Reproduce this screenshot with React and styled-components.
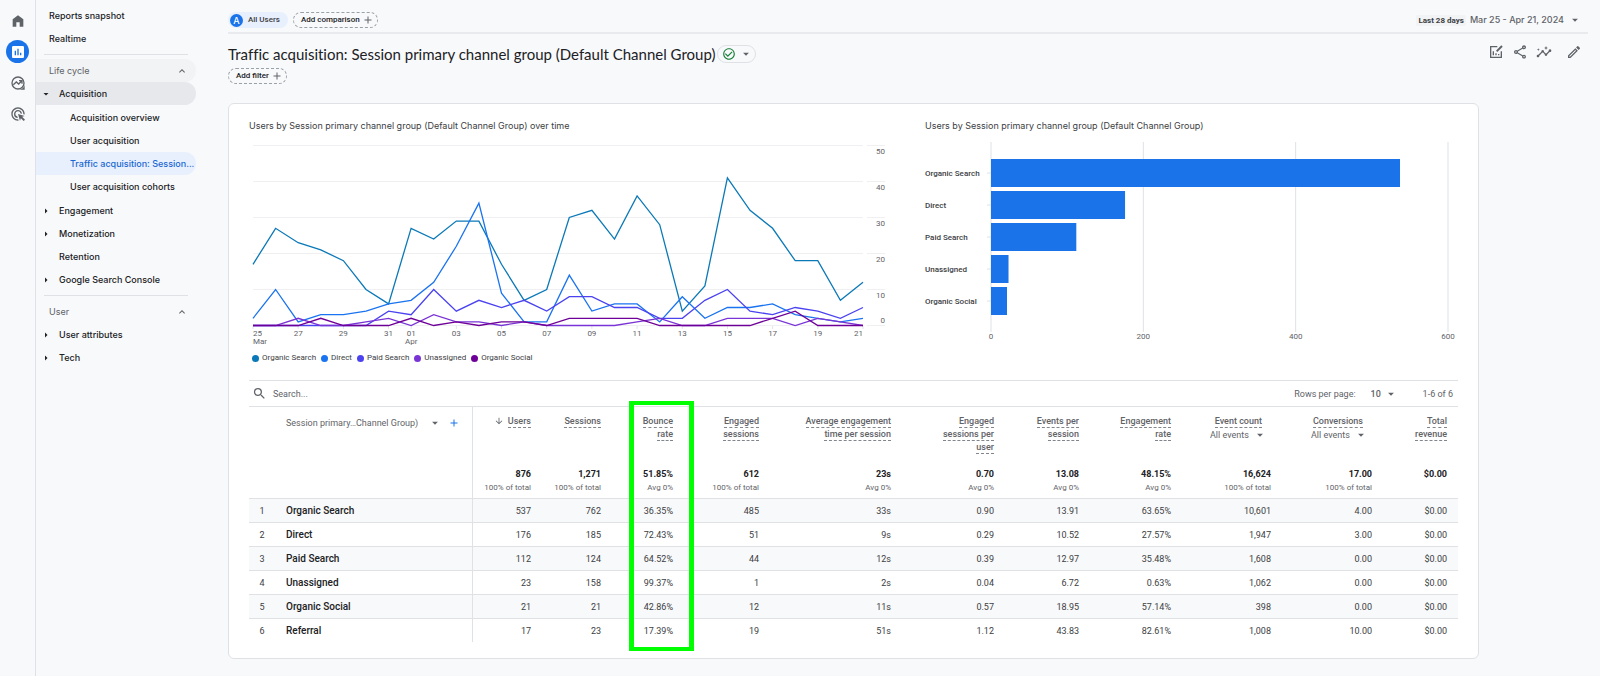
import React from 'react';
import styled, { createGlobalStyle, css } from 'styled-components';
import {
  MdAssessment, MdAdsClick, MdOutlineShare, MdInsights, MdOutlineModeEdit, MdCheckCircleOutline,
  MdSearch, MdArrowDropDown, MdArrowRight, MdArrowDownward, MdAdd, MdExpandLess,
} from 'react-icons/md';

const sans = 'Inter, "Open Sans", sans-serif';
const roboto = 'Roboto, "Liberation Sans", sans-serif';
const ink = '#202124';
const body = '#3c4043';
const muted = '#5f6368';
const line = '#dfe1e5';
const blue = '#1a73e8';

const GlobalStyle = createGlobalStyle`
  *, *::before, *::after { box-sizing: border-box; }
  body { margin: 0; background: #f8f9fb; color: ${ink}; font-family: ${roboto}; font-size: 9px; }
  button, select, input { font: inherit; color: inherit; background: none; border: 0; padding: 0; margin: 0; }
  button { cursor: pointer; }
  a { color: inherit; text-decoration: none; }
  ul { list-style: none; margin: 0; padding: 0; }
  svg { display: block; flex: none; }
`;

const Page = styled.div`
  display: flex;
  min-height: 100vh;
`;

/* ---------- icon rail ---------- */
const Rail = styled.nav`
  flex: 0 0 36px;
  display: flex;
  flex-direction: column;
  align-items: center;
  gap: 8px;
  padding-top: 9px;
  border-right: 1px solid ${line};
`;

const RailLink = styled.a`
  display: grid;
  place-items: center;
  width: 23px;
  height: 23px;
  border-radius: 50%;
  color: ${(p) => (p.$active ? '#fff' : muted)};
  background: ${(p) => (p.$active ? blue : 'transparent')};
`;

/* ---------- report navigation ---------- */
const Nav = styled.nav`
  flex: 0 0 160px;
  padding-top: 4px;
  font: 500 9px/23px ${sans};
`;

const indents = { root: 13, group: 23, leaf: 34 };

const rowStyle = css`
  display: flex;
  align-items: center;
  width: 100%;
  height: 23px;
  padding-left: ${(p) => indents[p.$level]}px;
  border-radius: 0 12px 12px 0;
  white-space: nowrap;
  text-align: left;
`;

const NavLink = styled.a`
  ${rowStyle}
  color: ${(p) => (p.$selected ? '#1967d2' : ink)};
  background: ${(p) => (p.$selected ? '#e8f0fe' : 'transparent')};
`;

const GroupButton = styled.button`
  ${rowStyle}
  padding-left: 4px;
  gap: 7px;
  background: ${(p) => (p.$open ? '#e6e8eb' : 'transparent')};
`;

const SectionButton = styled.button`
  ${rowStyle}
  justify-content: space-between;
  padding-right: 8px;
  font-weight: 400;
  color: ${muted};
  background: ${(p) => (p.$shaded ? '#f1f3f4' : 'transparent')};
`;

const NavRule = styled.hr`
  margin: 4px 8px;
  border: 0;
  border-top: 1px solid ${line};
`;

const SubList = styled.ul`
  padding: 1px 0;
`;

/* ---------- main column ---------- */
const Main = styled.main`
  flex: 1;
  min-width: 0;
  padding: 0 12px 18px 32px;
`;

const CompareBar = styled.div`
  display: flex;
  align-items: center;
  gap: 5px;
  padding: 12px 0 4px;
  border-bottom: 2px solid #e8eaed;
  font: 500 8px/16px ${roboto};
`;

const UserChip = styled.button`
  display: flex;
  align-items: center;
  gap: 5px;
  height: 16px;
  padding: 0 8px 0 2px;
  border-radius: 8px;
  background: #e8f0fe;
  color: ${body};
`;

const Avatar = styled.span`
  display: grid;
  place-items: center;
  width: 13px;
  height: 13px;
  border-radius: 50%;
  background: ${blue};
  color: #fff;
  font: 500 9px/13px ${sans};
`;

const DashedChip = styled.button`
  display: inline-flex;
  align-items: center;
  gap: 2px;
  height: 16px;
  padding: 0 3px 0 7px;
  border: 1px dashed #9aa0a6;
  border-radius: 8px;
  font: 500 8px/14px ${roboto};
`;

const DateButton = styled.button`
  display: flex;
  align-items: center;
  margin-left: auto;
  padding-right: 6px;
  gap: 4px;
  color: ${muted};
  font: 500 9px/16px ${sans};
`;

const DateTag = styled.span`
  padding: 0 2px;
  border-radius: 2px;
  background: #f1f3f4;
  color: ${body};
  font: 700 8px/11px ${roboto};
`;

const TitleRow = styled.div`
  display: flex;
  align-items: center;
  gap: 2px;
  margin-top: 11px;
  height: 18px;
`;

const Title = styled.h1`
  margin: 0;
  font: 400 15px/18px Lato, "Open Sans", sans-serif;
  font-variant-ligatures: none;
`;

const StatusPill = styled.button`
  display: flex;
  align-items: center;
  gap: 3px;
  height: 18px;
  padding: 0 2px 0 4px;
  border: 1px solid ${line};
  border-radius: 9px;
  color: ${muted};
`;

const Tools = styled.div`
  display: flex;
  gap: 8px;
  margin-left: auto;
  padding: 0 6px 4px 0;
  color: ${muted};

  button:last-child { margin-left: 6px; }
`;

const FilterRow = styled.div`
  display: flex;
  margin-top: 5px;
`;

const Card = styled.section`
  margin: 19px 109px 0 0;
  padding: 15px 20px 16px;
  border: 1px solid ${line};
  border-radius: 6px;
  background: #fff;
`;

/* ---------- charts ---------- */
const Charts = styled.div`
  display: grid;
  grid-template-columns: 636fr 533fr;
  gap: 40px;
`;

const ChartTitle = styled.h2`
  margin: 0 0 7px;
  color: ${body};
  font: 400 9px/14px ${sans};
`;

const Plot = styled.svg`
  width: 100%;
  height: auto;
  font-family: ${roboto};
  font-size: 8px;
  fill: ${muted};
`;

const Legend = styled.ul`
  display: flex;
  gap: 5px;
  padding: 6px 3px 16px;
  color: ${body};
  font: 400 8px/12px ${roboto};

  li { display: flex; align-items: center; gap: 3px; }
`;

const Dot = styled.span`
  width: 7px;
  height: 7px;
  border-radius: 50%;
  background: ${(p) => p.$color};
`;

/* ---------- table ---------- */
const TableBar = styled.div`
  display: flex;
  align-items: center;
  height: 27px;
  padding: 0 5px 0 3px;
  border: solid ${line};
  border-width: 1px 0;
  color: ${muted};
  font: 400 9px/16px ${roboto};
`;

const SearchBox = styled.label`
  flex: 1;
  display: flex;
  align-items: center;
  gap: 6px;

  input { flex: 1; outline: 0; }
  input::placeholder { color: ${muted}; opacity: 1; }
`;

const PageSize = styled.label`
  display: flex;
  align-items: center;
  gap: 15px;
  margin-right: 25px;
`;

const SelectBox = styled.span`
  display: inline-flex;
  align-items: center;
  gap: ${(p) => p.$gap}px;
  font-weight: ${(p) => p.$weight || 400};

  select { appearance: none; outline: 0; font-weight: inherit; }
`;

const TableArea = styled.div`
  position: relative;
`;

const Table = styled.table`
  width: 100%;
  table-layout: fixed;
  border-collapse: separate;
  border-spacing: 0;
  color: ${body};

  th, td { padding: 0 11px 0 0; text-align: right; font-weight: 400; }
`;

const HeadRow = styled.tr`
  height: 60px;

  th { padding-top: 8px; vertical-align: top; color: ${muted}; font: 500 9px/13px ${roboto}; }
`;

const MetricHead = styled.th`
  && {
    padding-left: ${(p) => (p.$oneLine ? 0 : 24)}px;
    padding-right: ${(p) => (p.$events ? 20 : 11)}px;
    white-space: ${(p) => (p.$oneLine ? 'nowrap' : 'normal')};
  }

  ${SelectBox} { margin-right: -5px; }
`;

const Term = styled.span`
  padding-bottom: 1px;
  border-bottom: 1px dashed #80868b;
`;

const SortIcon = styled(MdArrowDownward)`
  display: inline-block;
  margin-right: 4px;
  vertical-align: -2px;
`;

const DimensionCell = styled.th`
  && { border-right: 1px solid ${line}; padding-right: 0; text-align: left; }
`;

const DimensionPicker = styled.div`
  display: flex;
  align-items: center;
  gap: 6px;
  height: 16px;
  font-weight: 400;

  button { display: flex; align-items: center; gap: 10px; white-space: nowrap; }
`;

const TotalsRow = styled.tr`
  height: 31px;

  td { vertical-align: top; line-height: 14px; }
`;

const TotalValue = styled.strong`
  display: block;
  color: ${ink};
  font: 700 9px/14px ${roboto};
`;

const TotalNote = styled.span`
  display: block;
  color: ${muted};
  font: 400 8px/14px ${roboto};
`;

const DataRow = styled.tr`
  height: 24px;
  background: ${(p) => (p.$shaded ? '#f8f9fa' : '#fff')};

  th, td { border-top: 1px solid ${line}; }
  td:first-child { padding: 0 11px 0 0; text-align: center; }
`;

const RowName = styled(DimensionCell)`
  && { color: ${ink}; font: 500 10px/14px ${roboto}; }
`;

const Highlight = styled.div`
  position: absolute;
  top: -6px;
  bottom: -9px;
  left: calc(100% * 380 / 1209);
  width: calc(100% * 65 / 1209);
  border: solid #00ff00;
  border-width: 4px 5px;
  pointer-events: none;
`;

/* ---------- drawn icons ---------- */
const HomeIcon = () => (
  <svg width="16" height="16" viewBox="0 0 24 24" fill="currentColor">
    <path d="M4 20.500V9.500L12 3.500l8 6v11h-5.500V14h-5v6.500z" />
  </svg>
);

const ExploreIcon = () => (
  <svg width="16" height="16" viewBox="0 0 24 24" fill="none" stroke="currentColor" strokeWidth="2">
    <circle cx="12" cy="12" r="9" />
    <path d="M22 14v8h-8c4 0 8-4 8-8z" fill="currentColor" stroke="none" />
    <path d="M5 14.500l4.500-4 3.500 3 4-4M13.500 8.500H18V13" />
  </svg>
);

const EditChartIcon = () => (
  <svg width="16" height="16" viewBox="0 0 24 24" fill="none" stroke="currentColor" strokeWidth="2">
    <path d="M14 4H4v16h16v-9M8 17v-6M12 17v-3M16 17v-2" />
    <path d="M13 11l8-8" strokeWidth="3" />
  </svg>
);

/* ---------- data ---------- */
const series = [
  { name: 'Organic Search', color: '#0b79b7', values: [17, 27, 23, 21, 18, 10, 6, 27, 24, 29, 29, 17, 7, 10, 30, 32, 24, 36, 28, 4, 11, 41, 32, 27, 18, 18, 7, 12] },
  { name: 'Direct', color: '#1a73f0', values: [2, 10, 1, 3, 3, 4, 6, 7, 12, 22, 34, 9, 1, 1, 14, 4, 6, 6, 1, 8, 2, 5, 5, 6, 3, 2, 1, 2] },
  { name: 'Paid Search', color: '#4b43f0', values: [0, 0, 0, 0, 0, 0, 4, 3, 10, 4, 7, 5, 7, 4, 8, 8, 5, 5, 2, 2, 7, 10, 4, 3, 5, 4, 2, 5] },
  { name: 'Unassigned', color: '#7a34d6', values: [0, 0, 2, 0, 0, 1, 2, 0, 3, 1, 1, 0, 1, 0, 0, 0, 0, 1, 2, 0, 0, 2, 2, 2, 0, 2, 1, 0] },
  { name: 'Organic Social', color: '#6f0097', values: [0, 0, 0, 2, 0, 0, 0, 2, 0, 1, 0, 1, 1, 0, 2, 2, 2, 2, 0, 0, 0, 0, 0, 2, 4, 0, 0, 0] },
];

const days = [
  [0, '25', 'Mar'], [2, '27'], [4, '29'], [6, '31'], [7, '01', 'Apr'], [9, '03'], [11, '05'], [13, '07'],
  [15, '09'], [17, '11'], [19, '13'], [21, '15'], [23, '17'], [25, '19'], [27, '21'],
];

const bars = [['Organic Search', 537], ['Direct', 176], ['Paid Search', 112], ['Unassigned', 23], ['Organic Social', 21]];

const columns = [
  { width: 69, label: 'Users', sorted: true, oneLine: true, total: '876', note: '100% of total' },
  { width: 70, label: 'Sessions', oneLine: true, total: '1,271', note: '100% of total' },
  { width: 72, label: 'Bounce rate', total: '51.85%', note: 'Avg 0%' },
  { width: 86, label: 'Engaged sessions', total: '612', note: '100% of total' },
  { width: 132, label: 'Average engagement time per session', total: '23s', note: 'Avg 0%' },
  { width: 103, label: 'Engaged sessions per user', total: '0.70', note: 'Avg 0%' },
  { width: 85, label: 'Events per session', total: '13.08', note: 'Avg 0%' },
  { width: 92, label: 'Engagement rate', total: '48.15%', note: 'Avg 0%' },
  { width: 100, label: 'Event count', events: true, oneLine: true, total: '16,624', note: '100% of total' },
  { width: 101, label: 'Conversions', events: true, oneLine: true, total: '17.00', note: '100% of total' },
  { width: 75, label: 'Total revenue', total: '$0.00' },
];

const rows = [
  ['Organic Search', '537', '762', '36.35%', '485', '33s', '0.90', '13.91', '63.65%', '10,601', '4.00', '$0.00'],
  ['Direct', '176', '185', '72.43%', '51', '9s', '0.29', '10.52', '27.57%', '1,947', '3.00', '$0.00'],
  ['Paid Search', '112', '124', '64.52%', '44', '12s', '0.39', '12.97', '35.48%', '1,608', '0.00', '$0.00'],
  ['Unassigned', '23', '158', '99.37%', '1', '2s', '0.04', '6.72', '0.63%', '1,062', '0.00', '$0.00'],
  ['Organic Social', '21', '21', '42.86%', '12', '11s', '0.57', '18.95', '57.14%', '398', '0.00', '$0.00'],
  ['Referral', '17', '23', '17.39%', '19', '51s', '1.12', '43.83', '82.61%', '1,008', '10.00', '$0.00'],
];

/* ---------- parts ---------- */
const dayX = (i) => 4 + (i * 610) / 27;
const userY = (v) => 185.5 - v * 3.6;

const LineChart = () => (
  <Plot viewBox="0 0 636 206" role="img" aria-label="Users over time">
    {[0, 10, 20, 30, 40, 50].map((v) => (
      <g key={v}>
        <path d={`M4 ${userY(v)}H614M618 ${userY(v)}H636`} stroke="#f0f0f2" />
        <text x="636" y={v ? userY(v) + 8 : 183} textAnchor="end">{v}</text>
      </g>
    ))}
    {days.map(([i, day, month]) => {
      const anchor = i === 0 ? 'start' : i === 27 ? 'end' : 'middle';
      return (
        <g key={day} textAnchor={anchor}>
          <path d={`M${dayX(i)} 186v3`} stroke="#e4e5e8" />
          <text x={dayX(i)} y="196">{day}</text>
          {month && <text x={dayX(i)} y="204">{month}</text>}
        </g>
      );
    })}
    {series.map((s) => (
      <polyline
        key={s.name}
        points={s.values.map((v, i) => `${dayX(i).toFixed(1)},${userY(v).toFixed(1)}`).join(' ')}
        fill="none"
        stroke={s.color}
        strokeWidth="1.3"
      />
    ))}
  </Plot>
);

const barX = (v) => 66 + (v * 457) / 600;

const BarChart = () => (
  <Plot viewBox="0 0 533 206" role="img" aria-label="Users by channel">
    {[0, 200, 400, 600].map((v) => (
      <g key={v}>
        <path d={`M${barX(v)} 2V192`} stroke="#dfe1e3" />
        <text x={barX(v)} y="199" textAnchor="middle">{v}</text>
      </g>
    ))}
    {bars.map(([name, value], i) => (
      <g key={name}>
        <path d={`M62 ${33 + i * 32}h4`} stroke="#dfe1e3" />
        <text x="0" y={36 + i * 32} fill={body} fontWeight="500">{name}</text>
        <rect x="66" y={19 + i * 32} width={barX(value) - 66} height="28" fill={blue} />
      </g>
    ))}
  </Plot>
);

const Group = ({ label, open }) => (
  <GroupButton type="button" $level="group" $open={open} aria-expanded={!!open}>
    {open ? <MdArrowDropDown size={12} /> : <MdArrowRight size={12} />}
    {label}
  </GroupButton>
);

const Section = ({ label, shaded }) => (
  <SectionButton type="button" $level="root" $shaded={shaded} aria-expanded="true">
    {label}
    <MdExpandLess size={12} />
  </SectionButton>
);

const leaves = ['Acquisition overview', 'User acquisition', 'Traffic acquisition: Session...', 'User acquisition cohorts'];

const Sidebar = () => (
  <Nav aria-label="Reports">
    <NavLink href="#snapshot" $level="root">Reports snapshot</NavLink>
    <NavLink href="#realtime" $level="root">Realtime</NavLink>
    <NavRule />
    <Section label="Life cycle" shaded />
    <Group label="Acquisition" open />
    <SubList>
      {leaves.map((label, i) => (
        <li key={label}><NavLink href={`#acquisition-${i}`} $level="leaf" $selected={i === 2}>{label}</NavLink></li>
      ))}
    </SubList>
    <Group label="Engagement" />
    <Group label="Monetization" />
    <NavLink href="#retention" $level="group">Retention</NavLink>
    <Group label="Google Search Console" />
    <NavRule />
    <Section label="User" />
    <Group label="User attributes" />
    <Group label="Tech" />
  </Nav>
);

const ReportTable = () => (
  <TableArea>
    <Table>
      <colgroup>
        <col width="37" />
        <col width="187" />
        {columns.map((c) => <col key={c.label} width={c.width} />)}
      </colgroup>
      <thead>
        <HeadRow>
          <td />
          <DimensionCell scope="col">
            <DimensionPicker>
              <button type="button">Session primary…Channel Group)<MdArrowDropDown size={14} /></button>
              <button type="button" aria-label="Add dimension"><MdAdd size={12} color={blue} /></button>
            </DimensionPicker>
          </DimensionCell>
          {columns.map((c) => (
            <MetricHead key={c.label} scope="col" $events={c.events} $oneLine={c.oneLine}>
              {c.sorted && <SortIcon size={10} />}
              <Term>{c.label}</Term>
              {c.events && <br />}
              {c.events && (
                <SelectBox $gap={4}>
                  <select aria-label={`${c.label} events`}><option>All events</option></select>
                  <MdArrowDropDown size={14} />
                </SelectBox>
              )}
            </MetricHead>
          ))}
        </HeadRow>
        <TotalsRow>
          <td />
          <DimensionCell as="td" />
          {columns.map((c) => (
            <td key={c.label}>
              <TotalValue>{c.total}</TotalValue>
              <TotalNote>{c.note}</TotalNote>
            </td>
          ))}
        </TotalsRow>
      </thead>
      <tbody>
        {rows.map(([name, ...values], i) => (
          <DataRow key={name} $shaded={i % 2 === 0}>
            <td>{i + 1}</td>
            <RowName scope="row">{name}</RowName>
            {values.map((v, j) => <td key={columns[j].label}>{v}</td>)}
          </DataRow>
        ))}
      </tbody>
    </Table>
    <Highlight />
  </TableArea>
);

export default function App() {
  return (
    <Page>
      <GlobalStyle />
      <Rail aria-label="Products">
        <RailLink href="#home" aria-label="Home"><HomeIcon /></RailLink>
        <RailLink href="#reports" aria-label="Reports" $active><MdAssessment size={16} /></RailLink>
        <RailLink href="#explore" aria-label="Explore"><ExploreIcon /></RailLink>
        <RailLink href="#advertising" aria-label="Advertising"><MdAdsClick size={16} /></RailLink>
      </Rail>
      <Sidebar />
      <Main>
        <CompareBar>
          <UserChip type="button"><Avatar>A</Avatar>All Users</UserChip>
          <DashedChip type="button">Add comparison<MdAdd size={12} color={muted} /></DashedChip>
          <DateButton type="button">
            <DateTag>Last 28 days</DateTag>
            Mar 25 - Apr 21, 2024
            <MdArrowDropDown size={14} />
          </DateButton>
        </CompareBar>
        <TitleRow>
          <Title>Traffic acquisition: Session primary channel group (Default Channel Group)</Title>
          <StatusPill type="button" aria-label="Report status">
            <MdCheckCircleOutline size={14} color="#188038" />
            <MdArrowDropDown size={14} />
          </StatusPill>
          <Tools>
            <button type="button" aria-label="Customize"><EditChartIcon /></button>
            <button type="button" aria-label="Share"><MdOutlineShare size={16} /></button>
            <button type="button" aria-label="Insights"><MdInsights size={16} /></button>
            <button type="button" aria-label="Edit"><MdOutlineModeEdit size={16} /></button>
          </Tools>
        </TitleRow>
        <FilterRow>
          <DashedChip type="button">Add filter<MdAdd size={12} color={muted} /></DashedChip>
        </FilterRow>
        <Card>
          <Charts>
            <div>
              <ChartTitle>Users by Session primary channel group (Default Channel Group) over time</ChartTitle>
              <LineChart />
              <Legend>
                {series.map((s) => <li key={s.name}><Dot $color={s.color} />{s.name}</li>)}
              </Legend>
            </div>
            <div>
              <ChartTitle>Users by Session primary channel group (Default Channel Group)</ChartTitle>
              <BarChart />
            </div>
          </Charts>
          <TableBar>
            <SearchBox>
              <MdSearch size={15} />
              <input type="text" placeholder="Search..." aria-label="Search" />
            </SearchBox>
            <PageSize>
              Rows per page:
              <SelectBox $gap={2} $weight={500}>
                <select><option>10</option></select>
                <MdArrowDropDown size={14} />
              </SelectBox>
            </PageSize>
            <span>1-6 of 6</span>
          </TableBar>
          <ReportTable />
        </Card>
      </Main>
    </Page>
  );
}
